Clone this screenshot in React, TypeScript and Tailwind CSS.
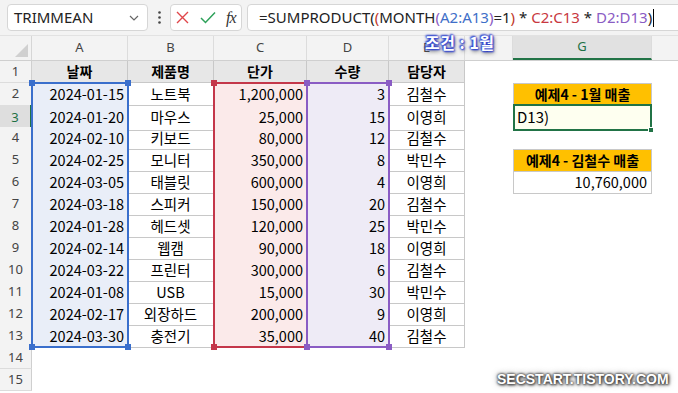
import React from 'react';

const rows = [
  ['2024-01-15', '노트북', '1,200,000', '3', '김철수'],
  ['2024-01-20', '마우스', '25,000', '15', '이영희'],
  ['2024-02-10', '키보드', '80,000', '12', '김철수'],
  ['2024-02-25', '모니터', '350,000', '8', '박민수'],
  ['2024-03-05', '태블릿', '600,000', '4', '이영희'],
  ['2024-03-18', '스피커', '150,000', '20', '김철수'],
  ['2024-01-28', '헤드셋', '120,000', '25', '박민수'],
  ['2024-02-14', '웹캠', '90,000', '18', '이영희'],
  ['2024-03-22', '프린터', '300,000', '6', '김철수'],
  ['2024-01-08', 'USB', '15,000', '30', '박민수'],
  ['2024-02-17', '외장하드', '200,000', '9', '이영희'],
  ['2024-03-30', '충전기', '35,000', '40', '김철수'],
];

const headers = ['날짜', '제품명', '단가', '수량', '담당자'];
const cols = ['A', 'B', 'C', 'D', 'E', 'F', 'G'];
const grid = 'grid grid-cols-[32px_96px_86px_93px_82px_76px_48px_139px_1fr]';
const cellFont = { fontFamily: '"Noto Sans CJK KR", "Noto Sans", sans-serif' };

function Handle({ x, y, color }: { x: number; y: number; color: string }) {
  return <div className="absolute w-[6px] h-[6px]" style={{ left: x - 3, top: y - 3, backgroundColor: color }} />;
}

function Range({ left, width, color }: { left: number; width: number; color: string }) {
  const top = 47;
  const height = 264;
  return (
    <>
      <div className="absolute border-2 pointer-events-none" style={{ left: left - 1, top: top - 1, width: width + 2, height: height + 2, borderColor: color }} />
      <Handle x={left} y={top} color={color} />
      <Handle x={left + width} y={top} color={color} />
      <Handle x={left} y={top + height} color={color} />
      <Handle x={left + width} y={top + height} color={color} />
    </>
  );
}

function FormulaBar() {
  return (
    <div className="flex items-center h-[36px] bg-[#f3f3f3] pl-[7px] overflow-hidden border-b border-[#e2e2e2]">
      <div className="w-[141px] h-[27px] shrink-0 bg-white border border-[#d6d6d6] rounded-[4px] flex items-center justify-between pl-[6px] pr-[8px]">
        <span className="text-[15px] text-[#222]" style={{ fontFamily: '"Noto Sans", sans-serif' }}>TRIMMEAN</span>
        <svg width="10" height="6" viewBox="0 0 10 6"><path d="M1 1l4 4 4-4" fill="none" stroke="#666" strokeWidth="1.2" /></svg>
      </div>
      <div className="w-[22px] shrink-0 flex justify-center">
        <svg width="3" height="13" viewBox="0 0 3 13"><circle cx="1.5" cy="1.5" r="1.3" fill="#444" /><circle cx="1.5" cy="6.5" r="1.3" fill="#444" /><circle cx="1.5" cy="11.5" r="1.3" fill="#444" /></svg>
      </div>
      <div className="w-[72px] h-[27px] shrink-0 bg-white border border-[#d6d6d6] rounded-[4px] flex items-center gap-[10px] pl-[4px]">
        <svg width="15" height="15" viewBox="0 0 15 15"><path d="M2 2l11 11M13 2L2 13" stroke="#e0464a" strokeWidth="1.4" /></svg>
        <svg width="16" height="13" viewBox="0 0 16 13"><path d="M1 7l4.5 4.5L15 1.5" fill="none" stroke="#2ea15a" strokeWidth="1.5" /></svg>
        <span className="text-[16px] italic text-[#333] tracking-[-1px]" style={{ fontFamily: '"Liberation Serif", serif' }}>fx</span>
      </div>
      <div className="w-[460px] h-[27px] shrink-0 ml-[5px] bg-white border border-[#d6d6d6] rounded-[4px] flex items-center pl-[11px] text-[15px] text-[#222] whitespace-nowrap" style={{ fontFamily: '"Noto Sans", sans-serif' }}>
        <span>=SUMPRODUCT(</span>
        <span className="text-[#c0392b]">(</span>
        <span>MONTH</span>
        <span className="text-[#8a5cc4]">(</span>
        <span className="text-[#3f6fc8]">A2:A13</span>
        <span className="text-[#8a5cc4]">)</span>
        <span>=1</span>
        <span className="text-[#c0392b]">)</span>
        <span>&nbsp;*&nbsp;</span>
        <span className="text-[#c8383f]">C2:C13</span>
        <span>&nbsp;*&nbsp;</span>
        <span className="text-[#8a5cc4]">D2:D13</span>
        <span>)</span>
        <span className="w-px h-[18px] bg-black ml-[1px]" />
      </div>
    </div>
  );
}

function ColumnHeader() {
  return (
    <div className={`${grid} h-[25px] bg-[#f3f3f3] border-b border-[#cfcfcf]`}>
      <div className="relative border-r border-[#d6d6d6]">
        <svg className="absolute right-[3px] bottom-[3px]" width="13" height="13" viewBox="0 0 13 13"><path d="M13 0L13 13L0 13Z" fill="#d0d0d0" /></svg>
      </div>
      {cols.map((c) => (
        <div key={c} className={`flex items-center justify-center text-[13px] border-r border-[#dcdcdc] ${c === 'G' ? 'bg-[#e1e1e1] text-[#1e7145] border-b-2 border-b-[#217346]' : 'text-[#444]'}`} style={{ fontFamily: '"Noto Sans", sans-serif' }}>
          {c}
        </div>
      ))}
      <div />
    </div>
  );
}

function RowNum({ n }: { n: number }) {
  const sel = n === 3;
  return (
    <div className={`flex items-center justify-center text-[13px] border-b border-[#dcdcdc] ${sel ? 'bg-[#dedede] text-[#1e7145] border-r-2 border-r-[#217346]' : 'bg-[#f3f3f3] text-[#444] border-r border-r-[#cfcfcf]'}`} style={{ fontFamily: '"Noto Sans", sans-serif' }}>
      {n}
    </div>
  );
}

const tcell = 'flex items-center border-r border-b border-[#c8c8c8] text-[14.5px] text-black px-[3px]';

function GCell({ row }: { row: number }) {
  if (row === 2 || row === 5) {
    return (
      <div className="flex items-center justify-center bg-[#ffc000] border border-[#c8c8c8] text-[14px] font-bold text-black" style={cellFont}>
        {row === 2 ? '예제4 - 1월 매출' : '예제4 - 김철수 매출'}
      </div>
    );
  }
  if (row === 3) {
    return (
      <div className="relative flex items-center bg-[#fefff0] border-2 border-[#217346] -mt-px text-[15px] text-black pl-[2px]" style={cellFont}>
        D13)
        <div className="absolute -right-[4px] -bottom-[4px] w-[6px] h-[6px] bg-[#217346] border border-white" />
      </div>
    );
  }
  if (row === 6) {
    return (
      <div className="flex items-center justify-end border border-t-0 border-[#c8c8c8] text-[14.5px] text-black pr-[4px]" style={cellFont}>
        10,760,000
      </div>
    );
  }
  return <div />;
}

export default function App() {
  const all = Array.from({ length: 15 }, (_, i) => i + 1);
  return (
    <div className="w-[678px] h-[393px] overflow-hidden bg-white relative select-none">
      <FormulaBar />
      <div className="relative">
        <ColumnHeader />
        {all.map((n) => {
          const data = n >= 2 && n <= 13 ? rows[n - 2] : null;
          return (
            <div key={n} className={`${grid} h-[22px]`}>
              <RowNum n={n} />
              {n === 1 &&
                headers.map((h) => (
                  <div key={h} className={`${tcell} justify-center bg-[#e7e7e7] font-bold text-[14px]`} style={cellFont}>
                    {h}
                  </div>
                ))}
              {data && (
                <>
                  <div className={`${tcell} justify-end bg-[#e9eef8]`} style={cellFont}>{data[0]}</div>
                  <div className={`${tcell} justify-center`} style={cellFont}>{data[1]}</div>
                  <div className={`${tcell} justify-end bg-[#fbeaea]`} style={cellFont}>{data[2]}</div>
                  <div className={`${tcell} justify-end bg-[#eeebf6]`} style={cellFont}>{data[3]}</div>
                  <div className={`${tcell} justify-center`} style={cellFont}>{data[4]}</div>
                </>
              )}
              {n > 13 && (
                <>
                  <div /><div /><div /><div /><div />
                </>
              )}
              <div />
              <GCell row={n} />
              <div />
            </div>
          );
        })}
        <Range left={32} width={96} color="#3a6fcc" />
        <Range left={214} width={93} color="#c4374a" />
        <Range left={307} width={82} color="#8a5cc4" />
        <div
          className="absolute left-[425px] -top-[6px] text-[16px] font-bold text-white tracking-[0.5px]"
          style={{ fontFamily: '"Noto Sans CJK KR", sans-serif', textShadow: '0 0 2px #2b3fd0, 0 0 2px #2b3fd0, 1px 1px 2px #2b3fd0, -1px -1px 2px #2b3fd0, 1px 2px 4px #555' }}
        >
          조건 : 1월
        </div>
      </div>
      <div
        className="absolute left-[497px] top-[369px] text-[14px] font-bold text-white"
        style={{ fontFamily: '"Liberation Sans", sans-serif', textShadow: '0 0 2px #444, 0 0 3px #444, 1px 1px 3px #333, 0 0 6px #777' }}
      >
        SECSTART.TISTORY.COM
      </div>
    </div>
  );
}
